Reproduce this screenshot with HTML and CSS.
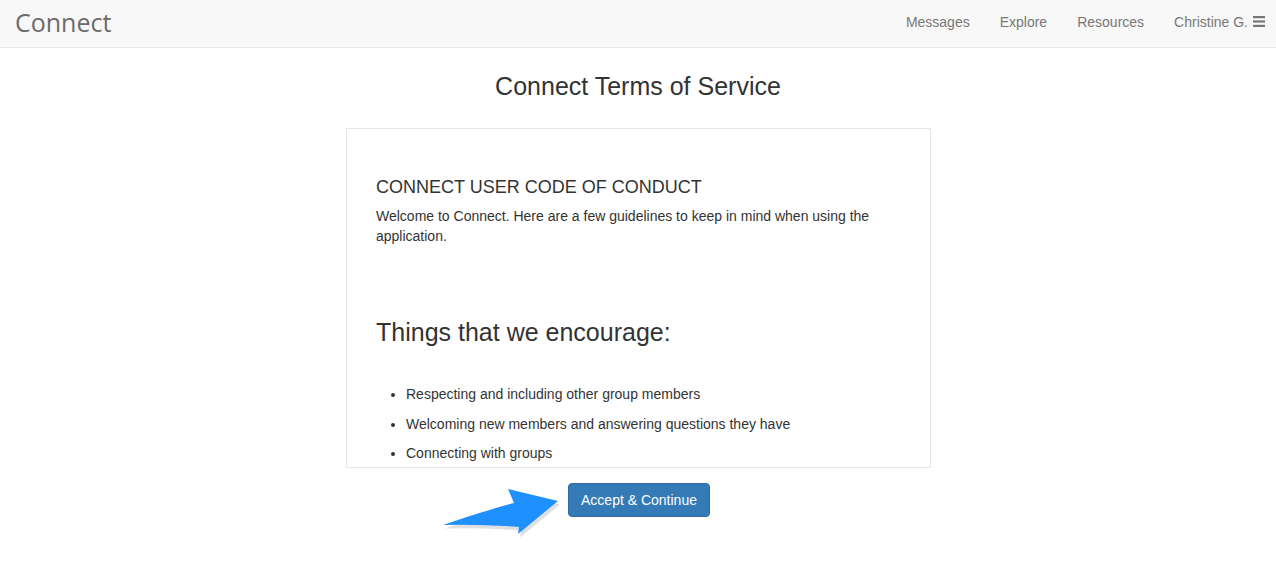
FILE: index.html
```html
<!DOCTYPE html>
<html>
<head>
<meta charset="utf-8">
<title>Connect Terms of Service</title>
<link rel="stylesheet" href="styles.css">
</head>
<body>
<header class="navbar">
  <a class="brand" href="#">Connect</a>
  <nav class="nav">
    <a href="#">Messages</a>
    <a href="#">Explore</a>
    <a href="#">Resources</a>
    <a href="#" class="user">Christine G. <svg class="burger" width="12" height="11" viewBox="0 0 12 11"><rect x="0" y="0" width="12" height="2.2" fill="#777"/><rect x="0" y="4.4" width="12" height="2.2" fill="#777"/><rect x="0" y="8.8" width="12" height="2.2" fill="#777"/></svg></a>
  </nav>
</header>
<main class="main">
  <h1 class="title">Connect Terms of Service</h1>
  <div class="terms">
    <h3 class="terms-head">CONNECT USER CODE OF CONDUCT</h3>
    <p class="terms-intro">Welcome to Connect. Here are a few guidelines to keep in mind when using the application.</p>
    <h2 class="terms-sub">Things that we encourage:</h2>
    <ul class="terms-list">
      <li>Respecting and including other group members</li>
      <li>Welcoming new members and answering questions they have</li>
      <li>Connecting with groups</li>
    </ul>
  </div>
  <div class="actions">
    <div class="btn-wrap">
      <svg class="arrow" width="124" height="56" viewBox="0 0 124 56">
        <path d="M4 41 Q40 28 75 19 L69 5 L119 17 L79 50 L80 43 Q40 40 4 41 Z" fill="rgba(0,0,0,0.12)" transform="translate(1 1.5)"/>
        <path d="M3 39 Q40 26 74 17 L68 3 L118 15 L78 48 L79 41 Q40 38 3 39 Z" fill="#1e90ff"/>
      </svg>
      <button class="btn">Accept &amp; Continue</button>
    </div>
  </div>
</main>
</body>
</html>
```
FILE: styles.css
```css
* { box-sizing: border-box; }
html, body { margin: 0; padding: 0; background: #fff; }
body {
  font-family: "Liberation Sans", Arial, Helvetica, sans-serif;
  font-size: 14px;
  color: #333;
  line-height: 20px;
}
.navbar {
  height: 48px;
  background: #f8f8f8;
  border-bottom: 1px solid #e7e7e7;
  display: flex;
  align-items: center;
  justify-content: space-between;
}
.brand {
  font-family: "Open Sans", sans-serif;
  font-size: 25px;
  color: #6b6b6b;
  text-decoration: none;
  padding-left: 15px;
  margin-top: -4px;
}
.nav {
  display: flex;
  align-items: center;
  padding-right: 11px;
  margin-top: -3px;
}
.nav a {
  color: #777;
  text-decoration: none;
  font-size: 14px;
  padding: 0 15px;
}
.nav a.user { padding-right: 0; display: flex; align-items: center; gap: 5px; }
.burger { display: block; margin-top: -2px; }
.main {
  padding-top: 25px;
  display: flex;
  flex-direction: column;
  align-items: center;
}
.title {
  font-size: 25px;
  font-weight: normal;
  line-height: 26px;
  margin: 0 0 29px;
  color: #333;
}
.terms {
  width: 585px;
  height: 340px;
  border: 1px solid #e7e7e7;
  padding: 48px 29px 0;
  overflow: hidden;
  margin-left: 1px;
}
.terms-head {
  font-size: 18px;
  font-weight: normal;
  line-height: 20px;
  margin: 0 0 9px;
}
.terms-intro { margin: 0; }
.terms-sub {
  font-size: 25px;
  font-weight: normal;
  line-height: 26px;
  margin: 73px 0 39px;
}
.terms-list {
  margin: 0;
  padding-left: 30px;
}
.terms-list li { margin-bottom: 9.5px; }
.actions {
  margin-top: 15px;
  display: flex;
  justify-content: center;
  padding-bottom: 30px;
}
.btn-wrap { position: relative; margin-left: 2px; }
.btn {
  font-family: "Liberation Sans", Arial, sans-serif;
  font-size: 14px;
  line-height: 20px;
  padding: 6px 12px;
  color: #fff;
  background: #337ab7;
  border: 1px solid #2e6da4;
  border-radius: 4px;
  cursor: pointer;
}
.arrow {
  position: absolute;
  left: -128px;
  top: 3px;
  overflow: visible;
}
```
